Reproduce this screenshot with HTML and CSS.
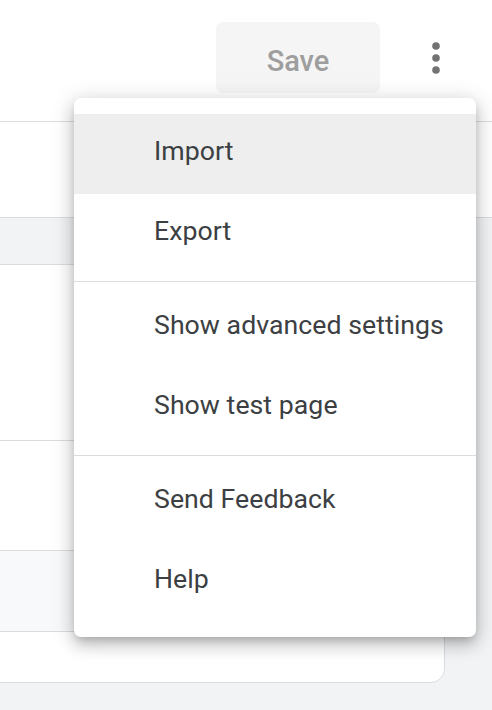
FILE: index.html
```html
<!DOCTYPE html>
<html lang="en">
<head>
<meta charset="utf-8">
<title>Menu</title>
<link rel="stylesheet" href="styles.css">
</head>
<body>
<header class="toolbar">
  <button class="save-btn" type="button">Save</button>
  <button class="more-btn" type="button" aria-label="More options">
    <svg width="40" height="40" viewBox="0 0 40 40" aria-hidden="true">
      <circle cx="20" cy="8" r="3.8" fill="#737373"/>
      <circle cx="20" cy="20" r="3.8" fill="#737373"/>
      <circle cx="20" cy="32" r="3.8" fill="#737373"/>
    </svg>
  </button>
</header>
<section class="subheader"></section>
<main class="content">
  <div class="card">
    <div class="card-row card-row-top"></div>
    <div class="card-row card-row-mid"></div>
    <div class="card-row card-row-band"></div>
    <div class="card-row card-row-last"></div>
  </div>
</main>
<nav class="menu" role="menu">
  <div class="menu-group">
    <div class="menu-item active" role="menuitem">Import</div>
    <div class="menu-item" role="menuitem">Export</div>
  </div>
  <div class="menu-divider"></div>
  <div class="menu-group">
    <div class="menu-item" role="menuitem">Show advanced settings</div>
    <div class="menu-item" role="menuitem">Show test page</div>
  </div>
  <div class="menu-divider"></div>
  <div class="menu-group">
    <div class="menu-item" role="menuitem">Send Feedback</div>
    <div class="menu-item" role="menuitem">Help</div>
  </div>
</nav>
</body>
</html>
```
FILE: styles.css
```css
* { box-sizing: border-box; }
html, body {
  margin: 0;
  padding: 0;
}
body {
  background: #f1f3f4;
  font-family: Roboto, "Noto Sans", "Liberation Sans", sans-serif;
  height: 710px;
  overflow: hidden;
  position: relative;
}
.toolbar {
  height: 122px;
  background: #ffffff;
  border-bottom: 1px solid #dadce0;
  display: flex;
  align-items: flex-start;
  padding: 22px 0 0 216px;
}
.save-btn {
  width: 164px;
  height: 71px;
  border: none;
  border-radius: 7px;
  background: #f5f5f5;
  color: #9e9e9e;
  font-family: Roboto, "Liberation Sans", sans-serif;
  font-size: 29px;
  font-weight: 500;
  padding: 6px 0 0;
  margin: 0;
}
.more-btn {
  width: 40px;
  height: 40px;
  border: none;
  background: none;
  padding: 0;
  margin: 16px 0 0 36px;
  display: block;
}
.more-btn svg { display: block; }
.subheader {
  height: 96px;
  background: #ffffff;
  border-bottom: 1px solid #dadce0;
}
.content {
  padding: 46px 47px 0 0;
}
.card {
  margin-left: -20px;
  background: #ffffff;
  border: 1px solid #dadce0;
  border-radius: 0 14px 14px 0;
  overflow: hidden;
}
.card-row-top { height: 176px; border-bottom: 1px solid #dadce0; }
.card-row-mid { height: 110px; border-bottom: 1px solid #dadce0; }
.card-row-band { height: 81px; border-bottom: 1px solid #dadce0; background: #f8f9fa; }
.card-row-last { height: 50px; }

.menu {
  position: absolute;
  top: 98px;
  left: 74px;
  width: 402px;
  background: #ffffff;
  border-radius: 7px;
  padding: 16px 0 15px;
  box-shadow: 0 5px 8px -3px rgba(0,0,0,0.2), 0 8px 16px 1px rgba(0,0,0,0.14), 0 3px 22px 3px rgba(0,0,0,0.12);
}
.menu-item {
  height: 80px;
  display: flex;
  align-items: center;
  padding: 0 0 7px 80px;
  font-size: 26.67px;
  letter-spacing: 0.05px;
  color: #3c4043;
  white-space: nowrap;
}
.menu-item.active { background: #eeeeee; }
.menu-divider {
  height: 1px;
  background: #dadce0;
  margin: 7px 0 6px;
}
```
